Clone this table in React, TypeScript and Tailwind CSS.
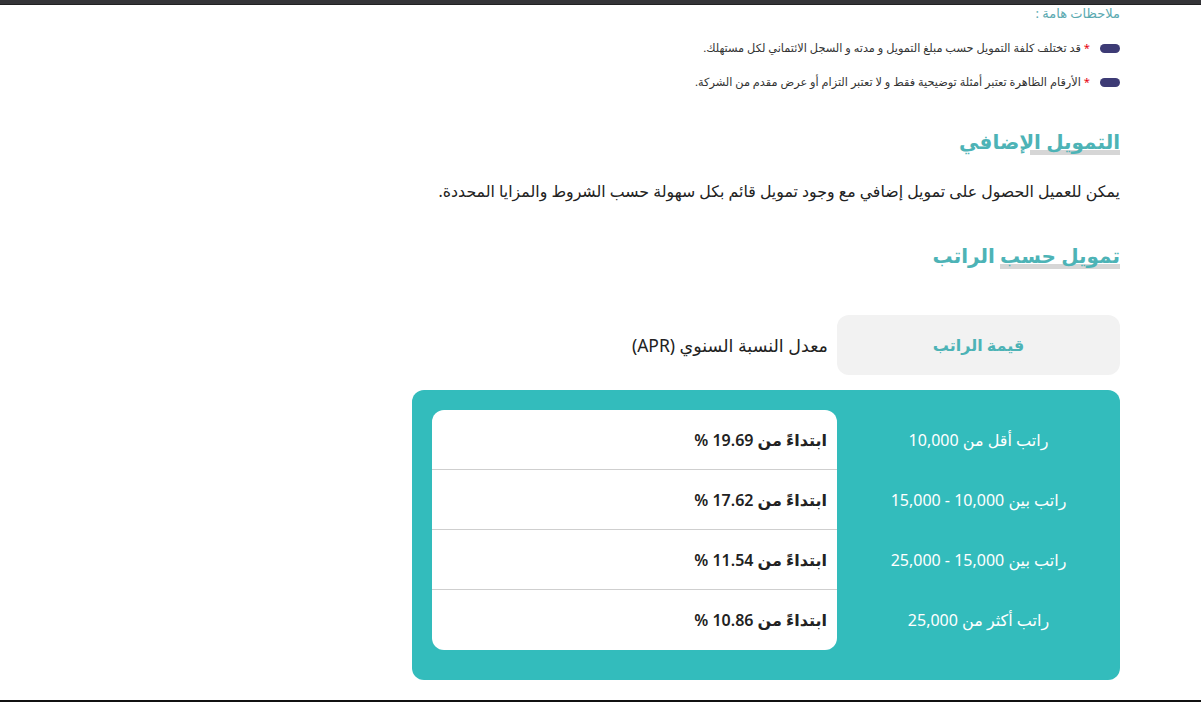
import React from 'react';

const notes = [
  'قد تختلف كلفة التمويل حسب مبلغ التمويل و مدته و السجل الائتماني لكل مستهلك.',
  'الأرقام الظاهرة تعتبر أمثلة توضيحية فقط و لا تعتبر التزام أو عرض مقدم من الشركة.',
];

const rates = [
  { salary: 'راتب أقل من 10,000', apr: '19.69' },
  { salary: 'راتب بين 10,000 - 15,000', apr: '17.62' },
  { salary: 'راتب بين 15,000 - 25,000', apr: '11.54' },
  { salary: 'راتب أكثر من 25,000', apr: '10.86' },
];

const Heading: React.FC<{ title: string; bar: string }> = ({ title, bar }) => (
  <h2 className="relative inline-block text-[20px] font-bold leading-[30px] text-[#4db3b6]">
    <span className={`absolute right-0 bottom-[2px] h-[5px] ${bar} bg-[#d6d6d6]`} />
    <span className="relative">{title}</span>
  </h2>
);

const App: React.FC = () => {
  return (
    <div className="min-h-[702px] bg-white flex flex-col font-['Noto_Sans','DejaVu_Sans',sans-serif]">
      <div className="h-[5px] bg-[#343438] border-b border-[#202022]" />
      <div dir="rtl" className="flex-1 w-[708px] ml-[412px] text-[#222]">
        <p className="mt-[1px] text-[13px] leading-[14px] text-[#5aa9b0]">ملاحظات هامة :</p>

        <ul className="mt-[21px] flex flex-col gap-[20px]">
          {notes.map((n) => (
            <li key={n} className="flex items-center gap-[10px]">
              <span className="w-[20px] h-[9px] rounded-full bg-[#3d3b75]" />
              <span className="text-[11.3px] leading-[14px] text-[#333]">
                <span className="text-red-600">*</span> {n}
              </span>
            </li>
          ))}
        </ul>

        <div className="mt-[38px]">
          <Heading title="التمويل الإضافي" bar="w-[90px]" />
        </div>

        <p className="mt-[23px] text-[15.8px] leading-[22px] text-[#222]">
          يمكن للعميل الحصول على تمويل إضافي مع وجود تمويل قائم بكل سهولة حسب الشروط والمزايا المحددة.
        </p>

        <div className="mt-[39px]">
          <Heading title="تمويل حسب الراتب" bar="w-[120px]" />
        </div>

        <div className="mt-[44px] grid grid-cols-[283px_425px] items-center">
          <div className="h-[60px] rounded-[12px] bg-[#f2f2f2] flex items-center justify-center text-[16px] font-bold text-[#4db3b6]">
            قيمة الراتب
          </div>
          <div className="pr-[9px] text-[17.5px] text-[#222]">معدل النسبة السنوي (APR)</div>
        </div>

        <div className="mt-[15px] rounded-[12px] bg-[#33bcbc] pt-[20px] pb-[30px] pl-[20px] grid grid-cols-[283px_405px]">
          <div className="flex flex-col">
            {rates.map((r) => (
              <div key={r.salary} className="h-[60px] flex items-center justify-center text-[16px] text-white">
                {r.salary}
              </div>
            ))}
          </div>
          <div className="bg-white rounded-[12px] overflow-hidden flex flex-col">
            {rates.map((r, i) => (
              <div
                key={r.apr}
                className={`h-[60px] flex items-center pr-[10px] text-[16px] font-semibold text-[#222] ${
                  i < rates.length - 1 ? 'border-b border-[#cfcfcf]' : ''
                }`}
              >
                ابتداءً من {r.apr} %
              </div>
            ))}
          </div>
        </div>
      </div>
      <div className="h-[2px] bg-[#111]" />
    </div>
  );
};

export default App;
